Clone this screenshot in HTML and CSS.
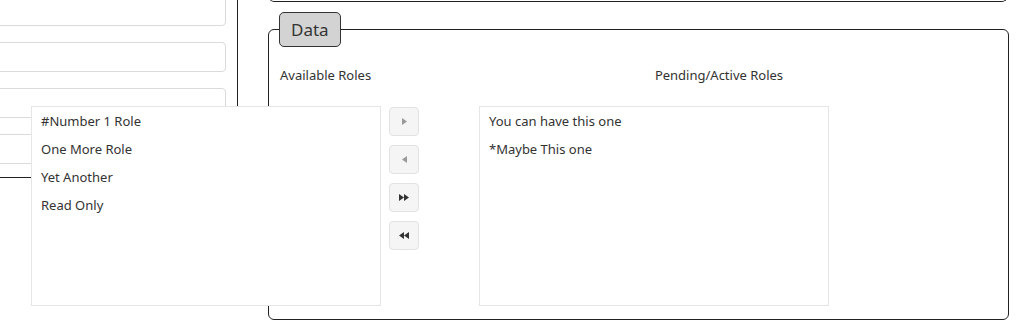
FILE: index.html
```html
<!DOCTYPE html>
<html lang="en">
<head>
<meta charset="utf-8">
<title>Roles</title>
<link rel="stylesheet" href="styles.css">
</head>
<body>
<div class="page">
  <aside class="side">
    <div class="field"></div>
    <div class="field"></div>
    <div class="field"></div>
    <div class="field"></div>
    <div class="rule"></div>
  </aside>
  <main class="main">
    <div class="topbox"></div>
    <fieldset class="data">
      <legend class="data-legend">Data</legend>
      <div class="heads">
        <div class="head head-avail">Available Roles</div>
        <div class="head head-pend">Pending/Active Roles</div>
      </div>
      <div class="dual">
        <ul class="listbox listbox-avail">
          <li class="item">#Number 1 Role</li>
          <li class="item">One More Role</li>
          <li class="item">Yet Another</li>
          <li class="item">Read Only</li>
        </ul>
        <div class="moves">
          <button class="mv mv-off" type="button" aria-label="Move right">
            <svg width="5" height="7" viewBox="0 0 5 7"><path d="M0 0L5 3.5L0 7Z" fill="#9a9a9a"/></svg>
          </button>
          <button class="mv mv-off" type="button" aria-label="Move left">
            <svg width="5" height="7" viewBox="0 0 5 7"><path d="M5 0L0 3.5L5 7Z" fill="#9a9a9a"/></svg>
          </button>
          <button class="mv" type="button" aria-label="Move all right">
            <svg width="10" height="7" viewBox="0 0 10 7"><path d="M0 0L5 3.5L0 7ZM5 0L10 3.5L5 7Z" fill="#333"/></svg>
          </button>
          <button class="mv" type="button" aria-label="Move all left">
            <svg width="10" height="7" viewBox="0 0 10 7"><path d="M5 0L0 3.5L5 7ZM10 0L5 3.5L10 7Z" fill="#333"/></svg>
          </button>
        </div>
        <ul class="listbox listbox-pend">
          <li class="item">You can have this one</li>
          <li class="item">*Maybe This one</li>
        </ul>
      </div>
    </fieldset>
  </main>
</div>
</body>
</html>
```

FILE: styles.css
```css
* { box-sizing: border-box; }

html, body {
  margin: 0;
  padding: 0;
  background: #fff;
  overflow: hidden;
}

body {
  font-family: "Noto Sans", "Open Sans", sans-serif;
  font-size: 13px;
  color: #333;
  width: 1021px;
  height: 333px;
}

.page {
  display: flex;
  align-items: flex-start;
}

.side {
  flex: 0 0 238px;
  height: 250px;
  border-right: 1px solid #222;
  padding-right: 11px;
  display: flex;
  flex-direction: column;
  gap: 16px;
  margin-top: -4px;
}

.field {
  height: 30px;
  margin-left: -40px;
  border: 1px solid #dadada;
  border-radius: 4px;
  background: #fff;
}

.rule {
  margin-top: -3px;
  border-top: 1px solid #222;
  margin-left: -40px;
  margin-right: -11px;
}

.main {
  flex: 0 0 771px;
  padding-left: 30px;
}

.topbox {
  height: 20px;
  margin: -18px 2px 0 1px;
  border: 1px solid #222;
  border-top: none;
  border-radius: 0 0 5px 5px;
}

.data {
  margin: 10px 0 0;
  padding: 0 10px 13px;
  border: 1px solid #222;
  border-radius: 6px;
  min-width: 0;
}

.data-legend {
  padding: 0 11px;
  height: 35px;
  line-height: 33px;
  font-size: 17px;
  color: #333;
  background: #d3d3d3;
  border: 1px solid #333;
  border-radius: 5px;
}

.heads {
  display: flex;
  padding-top: 18px;
  line-height: 20px;
}

.head-avail {
  flex: 0 0 200px;
  padding-left: 1px;
}

.head-pend {
  flex: 0 0 480px;
  text-align: center;
}

.dual {
  display: flex;
  align-items: flex-start;
  margin-top: 21px;
}

.listbox {
  list-style: none;
  margin: 0;
  padding: 0;
  width: 350px;
  height: 200px;
  border: 1px solid #e6e6e6;
  background: #fff;
}

.listbox-avail {
  position: relative;
  z-index: 1;
  margin-left: -248px;
}

.item {
  height: 28px;
  line-height: 28px;
  padding-left: 9px;
  white-space: nowrap;
}

.moves {
  display: flex;
  flex-direction: column;
  gap: 9px;
  margin: 1px 60px 0 8px;
}

.mv {
  width: 30px;
  height: 29px;
  padding: 0;
  border: 1px solid #e2e2e2;
  border-radius: 4px;
  background: #f5f5f5;
  display: flex;
  align-items: center;
  justify-content: center;
}

.mv svg { display: block; }
```
